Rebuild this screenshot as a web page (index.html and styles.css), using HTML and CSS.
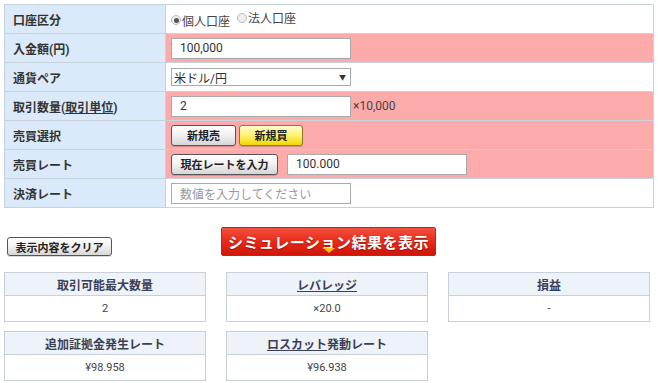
FILE: index.html
```html
<!DOCTYPE html>
<html lang="ja">
<head>
<meta charset="utf-8">
<link rel="stylesheet" href="styles.css">
</head>
<body>
<table class="form">
  <tr>
    <th>口座区分</th>
    <td class="plain">
      <span class="radio"><span class="dot on"></span>個人口座</span>
      <span class="radio"><span class="dot"></span>法人口座</span>
    </td>
  </tr>
  <tr>
    <th>入金額(円)</th>
    <td class="pink"><span class="input">100,000</span></td>
  </tr>
  <tr>
    <th>通貨ペア</th>
    <td class="plain"><span class="select">米ドル/円<span class="arrow">▼</span></span></td>
  </tr>
  <tr>
    <th>取引数量(<u>取引単位</u>)</th>
    <td class="pink"><span class="input">2</span><span class="unit">×10,000</span></td>
  </tr>
  <tr>
    <th>売買選択</th>
    <td class="pink"><span class="btn">新規売</span><span class="btn yellow">新規買</span></td>
  </tr>
  <tr>
    <th>売買レート</th>
    <td class="pink"><span class="btn wide">現在レートを入力</span><span class="input rate">100.000</span></td>
  </tr>
  <tr>
    <th>決済レート</th>
    <td class="plain"><span class="input ph">数値を入力してください</span></td>
  </tr>
</table>

<div class="actions">
  <span class="btn clear">表示内容をクリア</span>
  <span class="submit">シミュレーション結果を表示<span class="tri"></span></span>
</div>

<div class="results">
  <div class="box"><div class="hd">取引可能最大数量</div><div class="val">2</div></div>
  <div class="box"><div class="hd"><u>レバレッジ</u></div><div class="val">×20.0</div></div>
  <div class="box"><div class="hd">損益</div><div class="val">-</div></div>
  <div class="box"><div class="hd">追加証拠金発生レート</div><div class="val">¥98.958</div></div>
  <div class="box"><div class="hd"><u>ロスカット</u>発動レート</div><div class="val">¥96.938</div></div>
</div>
</body>
</html>
```

FILE: styles.css
```css
html, body {
  margin: 0;
  background: #fff;
}
body {
  padding: 4px 5px 0 4px;
  font-family: Roboto, "Noto Sans CJK JP", sans-serif;
  font-size: 12px;
  color: #333;
}
.form {
  width: 650px;
  border-collapse: collapse;
}
.form th, .form td {
  border: 1px solid #c9d3dc;
  height: 29px;
  padding: 0;
  box-sizing: border-box;
}
.form th {
  width: 161px;
  background: #dbeafa;
  text-align: left;
  font-weight: bold;
  padding-left: 8px;
  color: #333;
}
.form th u {
  text-decoration-color: #333;
}
.form td {
  padding-left: 5px;
}
.form td.pink {
  background: #fdaaab;
}
.form td.plain {
  background: #fff;
}
.radio {
  display: inline-flex;
  align-items: center;
  margin-right: 4px;
  color: #444;
}
.dot {
  width: 10px;
  height: 10px;
  border-radius: 50%;
  border: 1px solid #bbb;
  background: #eee;
  box-sizing: border-box;
  margin-right: 1px;
  display: inline-flex;
  align-items: center;
  justify-content: center;
}
.dot.on::after {
  content: "";
  width: 5px;
  height: 5px;
  border-radius: 50%;
  background: #555;
}
.input {
  display: inline-flex;
  align-items: center;
  width: 180px;
  height: 21px;
  box-sizing: border-box;
  border: 1px solid #aaa;
  background: #fff;
  padding-left: 8px;
  vertical-align: middle;
  color: #333;
}
.input.ph {
  color: #999;
}
.input.rate {
  margin-left: 6px;
}
.unit {
  margin-left: 2px;
  vertical-align: middle;
  color: #444;
}
.select {
  display: inline-flex;
  align-items: center;
  justify-content: space-between;
  width: 180px;
  height: 18px;
  box-sizing: border-box;
  border: 1px solid #aaa;
  background: #fff;
  padding: 0 4px 0 2px;
  vertical-align: middle;
  color: #333;
}
.arrow {
  font-size: 7px;
  color: #333;
}
.btn {
  display: inline-flex;
  align-items: center;
  justify-content: center;
  width: 65px;
  height: 21px;
  box-sizing: border-box;
  border: 1px solid #555;
  border-radius: 3px;
  background: linear-gradient(#ffffff, #f3f3f3 45%, #d6d6d6);
  font-weight: bold;
  font-size: 11px;
  color: #222;
  vertical-align: middle;
  margin-right: 3px;
  box-shadow: 0 1px 0 rgba(0,0,0,0.15);
}
.btn.yellow {
  width: 64px;
  border-color: #8a7a2a;
  background: linear-gradient(#fffbd0, #fff270 50%, #f3d800);
}
.btn.wide {
  width: 107px;
}
.actions {
  display: flex;
  align-items: flex-start;
  margin-top: 19px;
  height: 30px;
}
.btn.clear {
  width: 105px;
  height: 19px;
  margin: 10px 0 0 3px;
  font-size: 11px;
}
.submit {
  position: relative;
  display: flex;
  align-items: center;
  justify-content: center;
  width: 215px;
  height: 29px;
  margin-left: 109px;
  box-sizing: border-box;
  border-radius: 2px;
  background: linear-gradient(#f4513f, #e62a18 50%, #d01606);
  border: 1px solid #c0261a;
  color: #fff;
  font-weight: bold;
  font-size: 15px;
  letter-spacing: 0.5px;
  text-shadow: 0 1px 1px rgba(0,0,0,0.35);
}
.tri {
  position: absolute;
  left: 101px;
  bottom: 2px;
  width: 0;
  height: 0;
  border-left: 6px solid transparent;
  border-right: 6px solid transparent;
  border-top: 5px solid #ffc21a;
}
.results {
  display: grid;
  grid-template-columns: repeat(3, 202px);
  column-gap: 20px;
  row-gap: 9px;
  margin-top: 15px;
}
.box {
  border: 1px solid #c9cfd8;
}
.box .hd {
  height: 22px;
  background: #eef2f9;
  border-bottom: 1px solid #c9cfd8;
  display: flex;
  align-items: center;
  justify-content: center;
  font-weight: bold;
  color: #3a3f55;
}
.box .hd u {
  text-decoration-color: #3a3f55;
}
.box .val {
  height: 25px;
  display: flex;
  align-items: center;
  justify-content: center;
  color: #444;
  font-size: 11px;
}
```
